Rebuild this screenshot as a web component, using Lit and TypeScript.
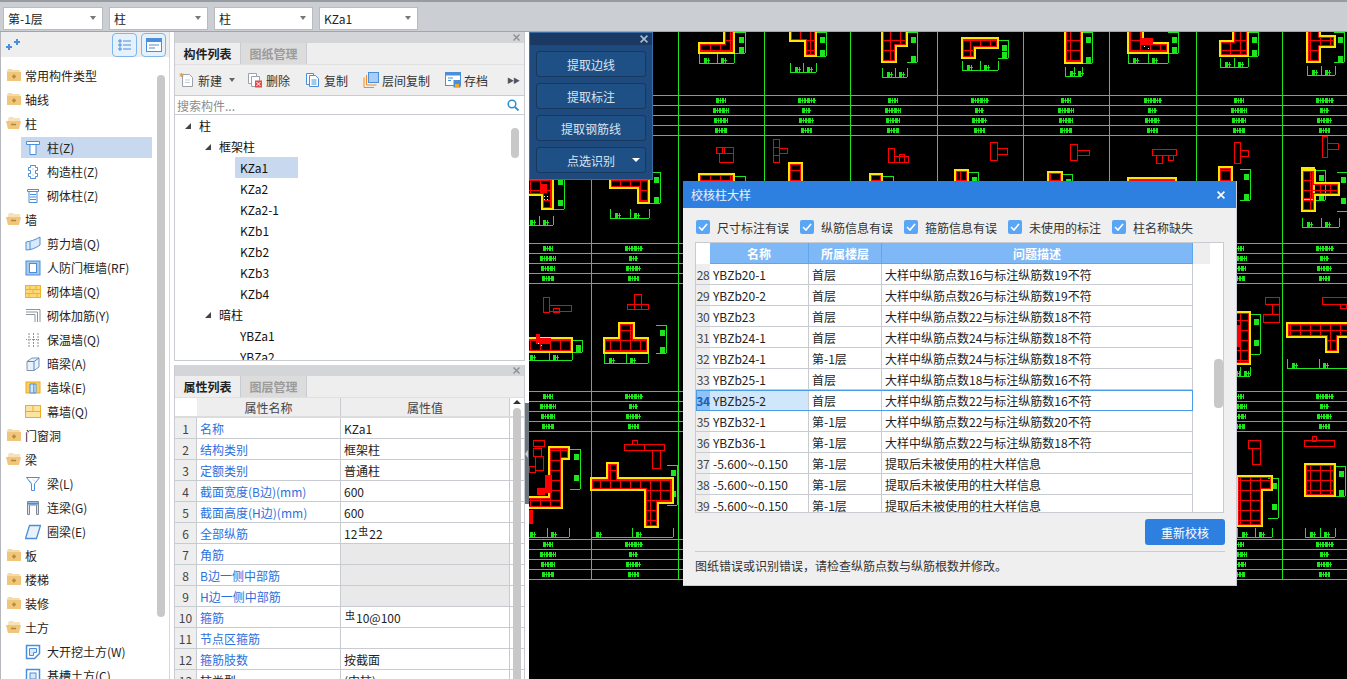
import { LitElement, css, html, svg } from "lit";
import { customElement } from "lit/decorators.js";

const GREEN = "#1ee61e";

// icons, all on a 16x16 box
const blue = "#4a8fdc";
const folderClosed = svg`<path d="M1 4l1-2h4l1 1h6l1 1v1H1z" fill="#f4dca8"/><rect x="1" y="5" width="14" height="9" fill="#efc67c"/><path d="M6 9.5h4M8 7.5v4" stroke="#b8893a" stroke-width="1.6"/>`;
const folderOpen = svg`<path d="M2 4l1-2h4l1 1h6v3H2z" fill="#f6e2b8"/><path d="M0 6h15l-2 8H2z" fill="#efc67c"/><path d="M5 9.5h5" stroke="#b8893a" stroke-width="1.6"/>`;

const icons: Record<string, unknown> = {
  col: svg`<path d="M1.5 1.5h13v3h-13zM5 4.5h6v10H5z" fill="#fff" stroke=${blue}/>`,
  gz: svg`<path d="M5.5 1.5h5v2h2v3h-2v3h2v3h-2v2h-5v-2h-2v-3h2v-3h-2v-3h2z" fill="#fff" stroke=${blue}/><path d="M7 5h2M7 11h2" stroke="#b9d3f0"/>`,
  qt: svg`<path d="M2.5 1.5h11v2h-11zM4 3.5h8v11H4z" fill="#fff" stroke=${blue}/><path d="M5 6.5h6M5 9h6M5 11.5h6" stroke=${blue}/>`,
  jlq: svg`<path d="M1 6c4-.5 9-2 14-5v8c-4 3-9 5-14 5z" fill="#dbe8f7" stroke=${blue}/><path d="M5 6v8" stroke=${blue}/>`,
  rf: svg`<rect x="1" y="1" width="14" height="14" fill="#a9c8ec" stroke=${blue}/><rect x="4.5" y="3.5" width="7" height="9" fill="#fff" stroke=${blue}/>`,
  brick: svg`<rect x="0.5" y="1.5" width="15" height="12" fill="#fbd778" stroke="#f0b429"/><path d="M1 5.5h14M1 9.5h14M5 2v3.5M11 2v3.5M8 5.5v4M4 9.5v4M12 9.5v4" stroke="#f0b429"/>`,
  jj: svg`<path d="M1 1.5h14V14M1 4h11.500V14M1 6.500h9V14" fill="none" stroke="#8b95a1"/>`,
  bw: svg`<path d="M4 1v14M8.500 1v14M13 1v14" stroke="#8b95a1" stroke-dasharray="2 1"/><path d="M1 7.500h14" stroke="#8b95a1" stroke-dasharray="1 1"/>`,
  al: svg`<path d="M2 5.500l5-3.500h7v9l-5 3.500H2z" fill="#e9f1fa" stroke="#8093a8"/><path d="M2 5.500h7v9M9 5.500l5-3.500" fill="none" stroke=${blue}/>`,
  qd: svg`<rect x="1" y="2" width="14" height="11" fill="#fbcf5e" stroke="#efaa1c"/><path d="M5 4h4v9H5z" fill="#d9e6f6" stroke=${blue}/><path d="M9 4h2v9H9z" fill="#fff" stroke=${blue}/>`,
  mq: svg`<rect x="0.500" y="1.500" width="15" height="12" fill="#fde3a2" stroke="#f0ae1e"/><path d="M1 7.500h14M8 2v5.500" stroke="#f0ae1e"/>`,
  beam: svg`<path d="M1.500 1.500h13L9.500 8v6.500h-3V8z" fill="#fff" stroke=${blue}/><path d="M4 3.500l3 4M8 3.500l2 2" stroke="#b9d3f0"/>`,
  ll: svg`<path d="M2.500 1.500h11v13h-2V5h-7v9.500h-2z" fill="#dfe3e8" stroke="#7d8893"/><path d="M3 3.500h10" stroke=${blue} stroke-width="2"/>`,
  ql: svg`<path d="M4.500 1.500h11l-4 13H0.500z" fill="#e9f1fa" stroke=${blue} stroke-width="1.300"/>`,
  dk: svg`<path d="M1.500 1.500h13v8l-5 5h-8z" fill="#fff" stroke=${blue} stroke-width="1.500"/><path d="M4.500 4.500h7v4h-3v3h-4z" fill="#dbe8f7" stroke=${blue}/>`,
  jc: svg`<rect x="1.500" y="1.500" width="13" height="13" fill="#fff" stroke=${blue} stroke-width="1.500"/><rect x="5" y="5" width="6" height="6" fill="#dbe8f7" stroke=${blue}/>`,
};

const tools: Record<string, unknown> = {
  add: svg`<path d="M3.500 2.500h7l3 3v9h-10z" fill="#fff" stroke="#9aa3ad"/><path d="M2.500 1v4M.5 3h4M1 1.500l3 3M4 1.500l-3 3" stroke="#f29a2e"/><path d="M6 8h5M6 10.500h5" stroke="#c9ced4"/>`,
  del: svg`<path d="M1.500 1.500h8v10h-8z" fill="#fff" stroke="#9aa3ad"/><path d="M4.500 4.500h8v10h-8z" fill="#fff" stroke="#9aa3ad"/><rect x="8" y="8.500" width="7" height="7" fill="#e04b4b"/><path d="M9.500 10l4 4M13.500 10l-4 4" stroke="#fff"/>`,
  copy: svg`<path d="M1.500 1.500h7v11h-7z" fill="#fff" stroke=${blue}/><path d="M4.500 3.500h6l3 3v8h-9z" fill="#fff" stroke=${blue}/><path d="M6.500 8h5M6.500 10h5M6.500 12h5" stroke=${blue}/>`,
  floor: svg`<rect x="5.500" y="0.500" width="10" height="10" fill="#a9cdf5" stroke=${blue}/><path d="M3.500 3v10h10M1 5.500v10h10" fill="none" stroke="#ee8b2d"/>`,
  save: svg`<rect x="0.500" y="0.500" width="15" height="13" fill="#fff" stroke=${blue}/><rect x="1" y="1" width="14" height="2.500" fill=${blue}/><path d="M3 6h5M3 8.500h3" stroke=${blue}/><rect x="8.500" y="8" width="7" height="7.500" fill=${blue}/><rect x="10" y="12" width="4" height="3" fill="#f5a623"/>`,
};

const mainTree = [
  ["常用构件类型", "closed"], ["轴线", "closed"], ["柱", "open"],
  ["柱(Z)", "col"], ["构造柱(Z)", "gz"], ["砌体柱(Z)", "qt"],
  ["墙", "open"],
  ["剪力墙(Q)", "jlq"], ["人防门框墙(RF)", "rf"], ["砌体墙(Q)", "brick"], ["砌体加筋(Y)", "jj"],
  ["保温墙(Q)", "bw"], ["暗梁(A)", "al"], ["墙垛(E)", "qd"], ["幕墙(Q)", "mq"],
  ["门窗洞", "closed"], ["梁", "open"],
  ["梁(L)", "beam"], ["连梁(G)", "ll"], ["圈梁(E)", "ql"],
  ["板", "closed"], ["楼梯", "closed"], ["装修", "closed"], ["土方", "open"],
  ["大开挖土方(W)", "dk"], ["基槽土方(C)", "jc"],
];

const parts: [string, number][] = [
  ["柱", 0], ["框架柱", 1], ["KZa1", 2], ["KZa2", 2], ["KZa2-1", 2], ["KZb1", 2],
  ["KZb2", 2], ["KZb3", 2], ["KZb4", 2], ["暗柱", 1], ["YBZa1", 2], ["YBZa2", 2],
];

const rebar = html`<span class="rebar">虫</span>`;
const props: [string, unknown, boolean, boolean?][] = [
  ["名称", "KZa1", true],
  ["结构类别", "框架柱", true],
  ["定额类别", "普通柱", true],
  ["截面宽度(B边)(mm)", "600", true],
  ["截面高度(H边)(mm)", "600", true],
  ["全部纵筋", html`12${rebar}22`, true],
  ["角筋", "", true, true],
  ["B边一侧中部筋", "", true, true],
  ["H边一侧中部筋", "", true, true],
  ["箍筋", html`${rebar}10@100`, true],
  ["节点区箍筋", "", true],
  ["箍筋肢数", "按截面", true],
  ["柱类型", "(中柱)", false],
];

const msg = (a: number, b: number) => `大样中纵筋点数${a}与标注纵筋数${b}不符`;
const unused = "提取后未被使用的柱大样信息";
const issues = [
  [28, "YBZb20-1", "首层", msg(16, 19)],
  [29, "YBZb20-2", "首层", msg(26, 19)],
  [30, "YBZb23", "首层", msg(22, 18)],
  [31, "YBZb24-1", "首层", msg(24, 18)],
  [32, "YBZb24-1", "第-1层", msg(24, 18)],
  [33, "YBZb25-1", "首层", msg(18, 16)],
  [34, "YBZb25-2", "首层", msg(22, 16)],
  [35, "YBZb32-1", "第-1层", msg(22, 20)],
  [36, "YBZb36-1", "第-1层", msg(22, 18)],
  [37, "-5.600~-0.150", "第-1层", unused],
  [38, "-5.600~-0.150", "第-1层", unused],
  [39, "-5.600~-0.150", "第-1层", unused],
];

// drawing data, in page coordinates
const gridX = [591, 678, 764, 850, 937, 1023, 1109, 1196, 1282];
const gridY = [95, 243, 391, 539];
const labelX = [548, 634, 721, 807, 893, 980, 1066, 1153, 1239, 1325];

// outline, y of the dimension line under it, x of the dimension line beside it
const sections: [string, number, number][] = [
  ["724,30 734,30 734,53 699,53 699,43 724,43", 63, 745],
  ["790,30 816,30 816,56 805,56 805,41 790,41", 72, 826],
  ["882,30 907,30 907,46 896,46 896,62 882,62", 77, 917],
  ["962,38 998,38 998,48 975,48 975,58 962,58", 70, 1008],
  ["1065,30 1082,30 1082,63 1065,63", 76, 1092],
  ["1128,30 1143,30 1143,43 1168,43 1168,53 1128,53", 63, 1178],
  ["1233,30 1248,30 1248,56 1220,56 1220,41 1233,41", 67, 1258],
  ["1307,30 1320,30 1320,36 1335,36 1335,47 1320,47 1320,62 1307,62", 75, 1344],
  ["699,174 734,174 734,200 699,200", 0, 745],
  ["789,163 802,163 802,200 789,200", 0, 0],
  ["870,174 882,174 882,200 870,200", 0, 893],
  ["955,170 968,170 968,200 955,200", 0, 978],
  ["1048,172 1062,172 1062,200 1048,200", 0, 1072],
  ["1128,178 1176,178 1176,200 1128,200", 0, 0],
  ["1219,167 1232,167 1232,200 1219,200", 0, 1250],
  ["1302,168 1314,168 1314,200 1302,200", 0, 1325],
  ["525,172 553,172 553,209 542,209 542,195 525,195", 225, 564],
  ["610,170 649,170 649,203 638,203 638,188 610,188", 218, 660],
  ["1230,312 1250,312 1250,364 1230,364", 376, 1260],
  ["1302,170 1315,170 1315,183 1339,183 1339,195 1315,195 1315,211 1302,211", 227, 1347],
  ["525,338 572,338 572,352 525,352", 360, 582],
  ["619,323 634,323 634,338 648,338 648,353 604,353 604,338 619,338", 363, 666],
  ["1287,323 1350,323 1350,337 1338,337 1338,352 1326,352 1326,337 1287,337", 368, 0],
  ["549,447 569,447 569,459 562,459 562,508 525,508 525,497 549,497", 537, 580],
  ["607,463 618,463 618,478 673,478 673,503 658,503 658,527 645,527 645,490 591,490 591,478 607,478", 537, 677],
  ["1237,476 1272,476 1272,490 1262,490 1262,526 1237,526", 537, 1278],
  ["1305,464 1335,464 1335,496 1305,496", 537, 1345],
];

const smallReds = [
  [716, 147, 8, 6], [719, 153, 14, 9], [722, 147, 11, 6], [773, 139, 6, 8], [773, 147, 6, 8], [773, 155, 6, 7], [779, 148, 8, 5],
  [888, 148, 6, 14], [894, 156, 14, 6], [899, 154, 5, 8], [990, 142, 7, 18], [997, 148, 10, 6], [1070, 144, 7, 16], [1077, 150, 12, 5],
  [1152, 149, 24, 6], [1156, 155, 6, 8], [1168, 155, 5, 5], [1234, 142, 6, 21], [1240, 150, 8, 6], [1322, 136, 5, 21], [1327, 143, 11, 6],
  [543, 297, 6, 15], [549, 305, 22, 6], [553, 308, 6, 4], [627, 304, 21, 5], [634, 294, 7, 15],
  [1265, 297, 14, 7], [1272, 304, 7, 10], [1263, 314, 16, 8], [1322, 297, 25, 7], [1340, 304, 6, 4],
  [533, 440, 11, 6], [533, 448, 8, 8], [535, 456, 8, 14], [529, 466, 6, 6], [624, 444, 20, 6], [644, 444, 20, 6], [652, 450, 8, 18], [632, 440, 5, 4],
  [1248, 440, 12, 8], [1252, 448, 8, 16], [1304, 440, 30, 6], [1312, 436, 4, 5],
];
const redBlobs = [
  [1142, 38, 11, 7], [541, 184, 6, 9], [536, 338, 15, 6], [536, 334, 4, 5],
  [545, 475, 7, 18], [537, 488, 8, 7], [1237, 325, 3, 22], [529, 510, 4, 14],
];

const widths = [10, 16, 14, 12, 18, 9, 15, 11];

@customElement("app-root")
class AppRoot extends LitElement {
  static styles = css`
    :host {
      display: flex;
      flex-direction: column;
      width: 1347px;
      height: 679px;
      overflow: hidden;
      background: #fff;
      font-family: "Noto Sans CJK SC", "Liberation Sans", sans-serif;
      font-size: 12px;
      color: #222;
    }
    svg {
      display: block;
      flex: none;
    }
    .topbar {
      display: flex;
      align-items: center;
      flex: none;
      gap: 6px;
      height: 32px;
      box-sizing: border-box;
      padding: 3px 0 0 3px;
      background: #cbced2;
      border-top: 2px solid #989ca1;
      border-bottom: 1px solid #a2a6ab;
    }
    .select {
      display: flex;
      align-items: center;
      justify-content: space-between;
      box-sizing: border-box;
      height: 23px;
      padding: 0 6px 0 4px;
      background: #fff;
      border: 1px solid #b8bcc0;
    }
    .select i {
      width: 0;
      height: 0;
      border: 3px solid transparent;
      border-top: 4px solid #777;
      border-bottom: 0;
    }
    .main {
      display: flex;
      flex: 1;
      min-height: 0;
    }
    .nav {
      position: relative;
      flex: none;
      box-sizing: border-box;
      width: 170px;
      border-left: 1px solid #b4b8bc;
      border-right: 1px solid #d6d8da;
      overflow: hidden;
    }
    .nav-tools {
      display: flex;
      align-items: center;
      gap: 4px;
      height: 25px;
      padding-right: 3px;
      background: #eee;
    }
    .nav-tools .spark {
      margin: 0 auto 0 5px;
    }
    .nav-btn {
      display: flex;
      align-items: center;
      justify-content: center;
      box-sizing: border-box;
      width: 25px;
      height: 24px;
      background: #e6f1fc;
      border: 1px solid #7db5ee;
      border-radius: 4px;
    }
    .nav-tree {
      padding-top: 6px;
    }
    .node {
      display: flex;
      align-items: center;
      gap: 3px;
      height: 24px;
      padding-left: 5px;
    }
    .node.leaf {
      gap: 6px;
      box-sizing: border-box;
      width: 131px;
      margin-left: 20px;
      padding-left: 4px;
      border-top: 2px solid transparent;
      border-bottom: 1px solid transparent;
      background-clip: padding-box;
    }
    .node.sel {
      background-color: #c7d8ef;
    }
    .thumb {
      position: absolute;
      background: #c8c8c8;
      border-radius: 4px;
    }
    .nav .thumb {
      left: 156px;
      top: 43px;
      width: 8px;
      height: 542px;
    }
    .middle {
      display: flex;
      flex: none;
      flex-direction: column;
      gap: 4px;
      width: 351px;
      margin-left: 4px;
    }
    .panel {
      position: relative;
      display: flex;
      flex-direction: column;
      box-sizing: border-box;
      border: 1px solid #c8ccd0;
      border-top: 0;
      overflow: hidden;
    }
    .panel.parts {
      height: 329px;
      flex: none;
    }
    .panel.attrs {
      flex: 1;
      min-height: 0;
      border-bottom: 0;
    }
    .panel-title {
      display: flex;
      align-items: center;
      justify-content: flex-end;
      flex: none;
      height: 11px;
      padding-right: 4px;
      background: #d3d5d8;
    }
    .tabs {
      display: flex;
      flex: none;
      height: 22px;
      background: #eee;
      border-bottom: 1px solid #e0e0e0;
      box-sizing: border-box;
    }
    .tab {
      display: flex;
      align-items: center;
      justify-content: center;
      width: 65px;
      font-weight: 700;
    }
    .tab.off {
      background: #dcdcdc;
      border-left: 1px solid #c8ccd0;
      border-right: 1px solid #c8ccd0;
      color: #9b9b9b;
    }
    .toolbar {
      display: flex;
      align-items: center;
      flex: none;
      height: 31px;
      box-sizing: border-box;
      padding-left: 4px;
      background: #efefef;
      border-bottom: 1px solid #c8ccd0;
    }
    .tool {
      display: flex;
      align-items: center;
      gap: 3px;
      color: #333;
    }
    .tool i {
      margin-left: 4px;
      margin-right: -3px;
      width: 0;
      height: 0;
      border: 3px solid transparent;
      border-top: 4px solid #666;
      border-bottom: 0;
    }
    .tool + .tool {
      margin-left: 15px;
    }
    .more {
      margin-left: auto;
      margin-right: 5px;
      color: #555;
      font-size: 7px;
      letter-spacing: -1px;
    }
    .search {
      display: flex;
      align-items: center;
      justify-content: space-between;
      flex: none;
      height: 19px;
      box-sizing: border-box;
      padding: 0 5px 0 2px;
      border-bottom: 1px solid #c8ccd0;
      color: #8c8c8c;
    }
    .part-tree {
      position: relative;
      flex: 1;
      overflow: hidden;
    }
    .part {
      display: flex;
      align-items: center;
      height: 21px;
      color: #111;
    }
    .part.l0 {
      padding-left: 10px;
    }
    .part.l1 {
      padding-left: 30px;
    }
    .part.l2 {
      width: 63px;
      margin-left: 60px;
      padding-left: 5px;
      box-sizing: border-box;
    }
    .part.sel {
      background: #c7d8ef;
    }
    .part b {
      width: 0;
      height: 0;
      margin-right: 8px;
      border-style: solid;
      border-width: 0 0 6px 6px;
      border-color: transparent transparent #444 transparent;
    }
    .part-tree .thumb {
      left: 336px;
      top: 13px;
      width: 8px;
      height: 30px;
    }
    .prop-grid {
      flex: 1;
      overflow: hidden;
    }
    .prop-row {
      display: grid;
      grid-template-columns: 22px 144px 169px;
      box-sizing: border-box;
      height: 21px;
      border-bottom: 1px solid #c8ccd0;
    }
    .prop-row.head {
      height: 20px;
      border-bottom: 2px solid #dcdcdc;
      text-align: center;
      color: #444;
    }
    .prop-row > div {
      display: flex;
      align-items: center;
      padding-left: 3px;
      border-right: 1px solid #c8ccd0;
      white-space: nowrap;
    }
    .prop-row.head > div {
      justify-content: center;
      padding: 0;
      background: #eee;
    }
    .prop-row.head > div:first-child {
      background: #fff;
      border: 0;
    }
    .prop-row .no {
      justify-content: center;
      padding: 0;
      background: #eee;
      color: #444;
    }
    .prop-row .key {
      color: #2e6fe0;
    }
    .prop-row .grey {
      background: #e9e9e9;
    }
    .rebar {
      position: relative;
      top: -2px;
      margin: 0 1px;
      font-size: 10px;
      line-height: 1;
    }
    .attr-scroll {
      position: absolute;
      top: 34px;
      left: 338px;
      width: 8px;
      bottom: 0;
    }
    .attr-scroll .thumb {
      top: 9px;
      left: 0;
      width: 8px;
      bottom: -10px;
    }
    .attr-scroll i {
      position: absolute;
      left: 0;
      top: 1px;
      width: 0;
      height: 0;
      border: 4px solid transparent;
      border-bottom: 4px solid #333;
      border-top: 0;
    }
    .splitter {
      flex: none;
      width: 4px;
      display: flex;
      flex-direction: column;
    }
    .splitter div {
      display: flex;
      align-items: center;
      box-sizing: border-box;
      margin-top: 371px;
      height: 101px;
      background: #6c7780;
    }
    .splitter i {
      width: 0;
      height: 0;
      border: 4px solid transparent;
      border-right: 3px solid #c8ccd0;
      border-left: 0;
    }
    .canvas {
      position: relative;
      flex: 1;
      background: #000;
      overflow: hidden;
    }
    .float {
      position: absolute;
      left: 0;
      top: 0;
      box-sizing: border-box;
      width: 124px;
      height: 148px;
      background: #1f4a7e;
      border: 1px solid #3a6da6;
      display: flex;
      flex-direction: column;
      gap: 6px;
    }
    .float-head {
      display: flex;
      align-items: center;
      justify-content: flex-end;
      flex: none;
      height: 12px;
      padding-right: 4px;
      background: #1a3a63;
    }
    .float-btn {
      position: relative;
      display: flex;
      align-items: center;
      justify-content: center;
      flex: none;
      box-sizing: border-box;
      width: 110px;
      height: 26px;
      margin-left: 6px;
      background: #1e4f85;
      border: 1px solid #17395f;
      border-radius: 3px;
      color: #dbe4ee;
    }
    .float-btn i {
      position: absolute;
      right: 5px;
      top: 10px;
      width: 0;
      height: 0;
      border: 4px solid transparent;
      border-top: 4px solid #fff;
      border-bottom: 0;
    }
    .dialog {
      position: absolute;
      left: 154px;
      top: 149px;
      display: flex;
      flex-direction: column;
      box-sizing: border-box;
      width: 554px;
      height: 405px;
      background: #efefef;
      border-right: 1px solid #c8ccd4;
      border-bottom: 1px solid #c8ccd4;
    }
    .dlg-head {
      display: flex;
      align-items: center;
      justify-content: space-between;
      flex: none;
      height: 27px;
      padding: 0 11px 0 8px;
      background: #2e80e0;
      color: #e8f2fc;
    }
    .dlg-body {
      display: flex;
      flex-direction: column;
      flex: 1;
      padding: 12px 11px 0 12px;
    }
    .checks {
      display: flex;
      gap: 11px;
      height: 14px;
      padding-left: 1px;
      color: #333;
    }
    .check {
      display: flex;
      align-items: center;
      gap: 7px;
      white-space: nowrap;
    }
    .box {
      display: flex;
      align-items: center;
      justify-content: center;
      width: 14px;
      height: 14px;
      background: #5ba5f5;
      border-radius: 2px;
    }
    .table {
      position: relative;
      flex: none;
      box-sizing: border-box;
      width: 529px;
      height: 271px;
      margin-top: 8px;
      background: #fff;
      border: 1px solid #c8ccd0;
      overflow: hidden;
    }
    .thead {
      display: flex;
      height: 21px;
      width: 514px;
      background: #eee;
    }
    .thead .cols {
      color: #fff;
      background: #7eb8f7;
      border-bottom: 1px solid #5ea7ef;
      box-sizing: border-box;
      height: 21px;
      font-weight: 700;
    }
    .cols {
      display: grid;
      grid-template-columns: 99px 73px 311px;
      flex: none;
    }
    .thead .spacer {
      width: 14px;
      flex: none;
      background: #fff;
    }
    .thead .cols > div {
      display: flex;
      align-items: center;
      justify-content: center;
      border-right: 1px solid #5ea7ef;
    }
    .trow {
      display: flex;
      box-sizing: border-box;
      height: 21px;
      width: 497px;
      color: #222;
    }
    .trow .idx {
      display: flex;
      align-items: center;
      justify-content: center;
      flex: none;
      width: 14px;
      background: #eee;
      color: #444;
      letter-spacing: -0.4px;
      border-bottom: 1px solid #c8ccd0;
      box-sizing: border-box;
    }
    .trow .cols > div {
      display: flex;
      align-items: center;
      box-sizing: border-box;
      padding-left: 3px;
      border-right: 1px solid #c8ccd0;
      border-bottom: 1px solid #c8ccd0;
      white-space: nowrap;
    }
    .trow.on {
      outline: 1px solid #4a9be8;
      outline-offset: -1px;
    }
    .trow.on .idx {
      background: #8ec2f8;
      color: #1f5fb0;
      font-weight: 700;
    }
    .trow.on .cols > div:first-child {
      background: #d0e6fb;
    }
    .trow.on .cols > div {
      border-bottom-color: transparent;
    }
    .table .thumb {
      left: 518px;
      top: 116px;
      width: 9px;
      height: 49px;
    }
    .actions {
      display: flex;
      justify-content: flex-end;
      margin-top: 6px;
    }
    .primary {
      display: flex;
      align-items: center;
      justify-content: center;
      width: 80px;
      height: 26px;
      background: #2e80e0;
      border-radius: 3px;
      color: #fff;
    }
    .rule {
      height: 1px;
      margin-top: 6px;
      background: #c8ccd4;
    }
    .hint {
      margin-top: 5px;
      line-height: 18px;
      color: #333;
    }
  `;

  private close(color: string, size = 7) {
    return html`<svg width=${size} height=${size} viewBox="0 0 7 7">
      <path d="M.5 .5l6 6M6.500 .5l-6 6" stroke=${color} stroke-width="1.400" />
    </svg>`;
  }

  private icon(body: unknown) {
    return html`<svg width="16" height="16" viewBox="0 0 16 16">${body}</svg>`;
  }

  private select(label: string, width: number) {
    return html`<div class="select" style="width:${width}px">${label}<i></i></div>`;
  }

  private cad() {
    let seq = 0;
    // a label too small to read: a broken bar with a thin line through it
    const blob = (x: number, y: number, w: number) =>
      svg`<path d="M${x} ${y}h${w}" stroke=${GREEN} stroke-width="5" stroke-dasharray="3 1 1 1 2 1" fill="none" />
        <path d="M${x} ${Math.floor(y) + 0.5}h${w}" stroke=${GREEN} fill="none" />`;
    return svg`<svg width="818" height="647" viewBox="529 32 818 647" shape-rendering="crispEdges">
      <defs>
        <pattern id="rebars" width="10" height="10" patternUnits="userSpaceOnUse">
          <path d="M0 .5H10M.5 0V10" stroke="#f00" stroke-width="1" fill="none" />
        </pattern>
        ${sections.map(
          ([p], i) => svg`<clipPath id="c${i}"><polygon points=${p} /></clipPath>`,
        )}
      </defs>
      <g stroke=${GREEN} fill="none">
        ${gridX.map((x) => svg`<path d="M${x + 0.5} 32V580" />`)}
        ${gridY.flatMap((y) =>
          [0, 10, 20, 30, 40].map((d) => svg`<path d="M529 ${y + d + 0.5}H1347" />`),
        )}
      </g>
      ${gridY.flatMap((y) =>
        labelX.flatMap((x) =>
          [5, 15, 25, 35].map((d) => {
            const w = widths[seq++ % widths.length];
            return blob(x - Math.round(w / 2), y + d, w);
          }),
        ),
      )}
      ${sections.map(([p, under, side], i) => {
        const nums = p.split(/[ ,]/).map(Number);
        const xs = nums.filter((_, n) => n % 2 === 0);
        const ys = nums.filter((_, n) => n % 2 === 1);
        const x0 = Math.min(...xs);
        const x1 = Math.max(...xs);
        const y0 = Math.min(...ys);
        const y1 = Math.max(...ys);
        const mid = Math.round((x0 + x1) / 2);
        return svg`
          ${under
            ? svg`<path d="M${x0} ${under + 0.5}H${x1}M${x0 + 0.5} ${under - 9}V${under}M${mid + 0.5} ${under - 9}V${under}M${x1 + 0.5} ${under - 9}V${under}" stroke=${GREEN} fill="none" />
                ${blob(x0 + 5, under - 3, 6)}${blob(mid + 4, under - 3, 6)}`
            : ""}
          ${side
            ? svg`<path d="M${side + 0.5} ${y0 + 2}V${Math.min(y1, y0 + 42)}M${side - 10} ${y0 + 2.500}H${side}M${side - 10} ${Math.min(y1, y0 + 42) + 0.5}H${side}" stroke=${GREEN} fill="none" />
                <rect x=${side - 6} y=${y0 + 7} width="5" height="6" fill=${GREEN} />
                <rect x=${side - 6} y=${Math.min(y1, y0 + 34) - 6} width="5" height="6" fill=${GREEN} />`
            : ""}
          <polygon points=${p} fill="url(#rebars)" clip-path="url(#c${i})" />
          <polygon points=${p} fill="none" stroke="#f00" stroke-width="3.500" clip-path="url(#c${i})" />
          <polygon points=${p} fill="none" stroke="#ffe600" stroke-width="1.500" />
        `;
      })}
      ${smallReds.map(
        ([x, y, w, h]) =>
          svg`<rect x=${x + 0.5} y=${y + 0.5} width=${w} height=${h} fill="none" stroke="#f00" />`,
      )}
      ${redBlobs.map(([x, y, w, h]) => svg`<rect x=${x} y=${y} width=${w} height=${h} fill="#f00" />`)}
      <path d="M544 196h1M547 196h1M544 199h1M547 199h1M538 343h1M541 345h1M1144 46h1M1148 48h1" stroke="#fff" />
    </svg>`;
  }

  render() {
    return html`
      <div class="topbar">
        ${this.select("第-1层", 100)}${this.select("柱", 99)}${this.select("柱", 99)}${this.select("KZa1", 99)}
      </div>
      <div class="main">
        <div class="nav">
          <div class="nav-tools">
            <svg class="spark" width="14" height="14" viewBox="0 0 14 14">
              <path d="M0 9h6M3 6v6M8 4h6M11 1v6" stroke=${blue} stroke-width="2" />
            </svg>
            <div class="nav-btn">
              <svg width="14" height="14" viewBox="0 0 14 14">
                <path d="M1 2h2v2H1zM1 6h2v2H1zM1 10h2v2H1z" fill="none" stroke=${blue} />
                <path d="M5 3h8M5 7h8M5 11h8" stroke=${blue} />
              </svg>
            </div>
            <div class="nav-btn">
              <svg width="16" height="14" viewBox="0 0 16 14">
                <rect x=".5" y=".5" width="15" height="13" fill="#fff" stroke=${blue} />
                <rect x="1" y="1" width="14" height="3" fill=${blue} />
                <path d="M3 7h10M3 10h6" stroke=${blue} />
              </svg>
            </div>
          </div>
          <div class="nav-tree">
            ${mainTree.map(([label, kind]) => {
              const group = kind === "closed" || kind === "open";
              const body = kind === "closed" ? folderClosed : kind === "open" ? folderOpen : icons[kind];
              return html`<div class="node ${group ? "" : "leaf"} ${label === "柱(Z)" ? "sel" : ""}">
                ${this.icon(body)}<span>${label}</span>
              </div>`;
            })}
          </div>
          <div class="thumb"></div>
        </div>
        <div class="middle">
          <div class="panel parts">
            <div class="panel-title">${this.close("#8a8d91")}</div>
            <div class="tabs"><div class="tab">构件列表</div><div class="tab off">图纸管理</div></div>
            <div class="toolbar">
              <div class="tool">${this.icon(tools.add)}新建<i></i></div>
              <div class="tool">${this.icon(tools.del)}删除</div>
              <div class="tool">${this.icon(tools.copy)}复制</div>
              <div class="tool">${this.icon(tools.floor)}层间复制</div>
              <div class="tool">${this.icon(tools.save)}存档</div>
              <div class="more">▶▶</div>
            </div>
            <div class="search">
              搜索构件...
              <svg width="12" height="12" viewBox="0 0 12 12">
                <circle cx="5" cy="5" r="3.800" fill="none" stroke="#2a8fd0" stroke-width="1.500" />
                <path d="M8 8l3.500 3.500" stroke="#2a8fd0" stroke-width="1.800" />
              </svg>
            </div>
            <div class="part-tree">
              ${parts.map(
                ([label, level]) => html`<div class="part l${level} ${label === "KZa1" ? "sel" : ""}">
                  ${level < 2 ? html`<b></b>` : ""}${label}
                </div>`,
              )}
              <div class="thumb"></div>
            </div>
          </div>
          <div class="panel attrs">
            <div class="panel-title">${this.close("#8a8d91")}</div>
            <div class="tabs"><div class="tab">属性列表</div><div class="tab off">图层管理</div></div>
            <div class="prop-grid">
              <div class="prop-row head"><div></div><div>属性名称</div><div>属性值</div></div>
              ${props.map(
                ([key, value, link, grey], i) => html`<div class="prop-row">
                  <div class="no">${i + 1}</div>
                  <div class=${link ? "key" : ""}>${key}</div>
                  <div class=${grey ? "grey" : ""}>${value}</div>
                </div>`,
              )}
            </div>
            <div class="attr-scroll"><i></i><div class="thumb"></div></div>
          </div>
        </div>
        <div class="splitter"><div><i></i></div></div>
        <div class="canvas">
          ${this.cad()}
          <div class="float">
            <div class="float-head">${this.close("#a9bdd4", 8)}</div>
            <div class="float-btn">提取边线</div>
            <div class="float-btn">提取标注</div>
            <div class="float-btn">提取钢筋线</div>
            <div class="float-btn">点选识别<i></i></div>
          </div>
          <div class="dialog">
            <div class="dlg-head">校核柱大样 ${this.close("#fff", 8)}</div>
            <div class="dlg-body">
              <div class="checks">
                ${["尺寸标注有误", "纵筋信息有误", "箍筋信息有误", "未使用的标注", "柱名称缺失"].map(
                  (label) => html`<div class="check">
                    <span class="box">
                      <svg width="10" height="8" viewBox="0 0 10 8">
                        <path d="M1 4l3 3 5-6" fill="none" stroke="#fff" stroke-width="1.600" />
                      </svg>
                    </span>${label}
                  </div>`,
                )}
              </div>
              <div class="table">
                <div class="thead">
                  <div class="spacer"></div>
                  <div class="cols"><div>名称</div><div>所属楼层</div><div>问题描述</div></div>
                </div>
                ${issues.map(
                  ([no, name, floor, text]) => html`<div class="trow ${no === 34 ? "on" : ""}">
                    <div class="idx">${no}</div>
                    <div class="cols"><div>${name}</div><div>${floor}</div><div>${text}</div></div>
                  </div>`,
                )}
                <div class="thumb"></div>
              </div>
              <div class="actions"><div class="primary">重新校核</div></div>
              <div class="rule"></div>
              <div class="hint">图纸错误或识别错误，请检查纵筋点数与纵筋根数并修改。</div>
            </div>
          </div>
        </div>
      </div>
    `;
  }
}
